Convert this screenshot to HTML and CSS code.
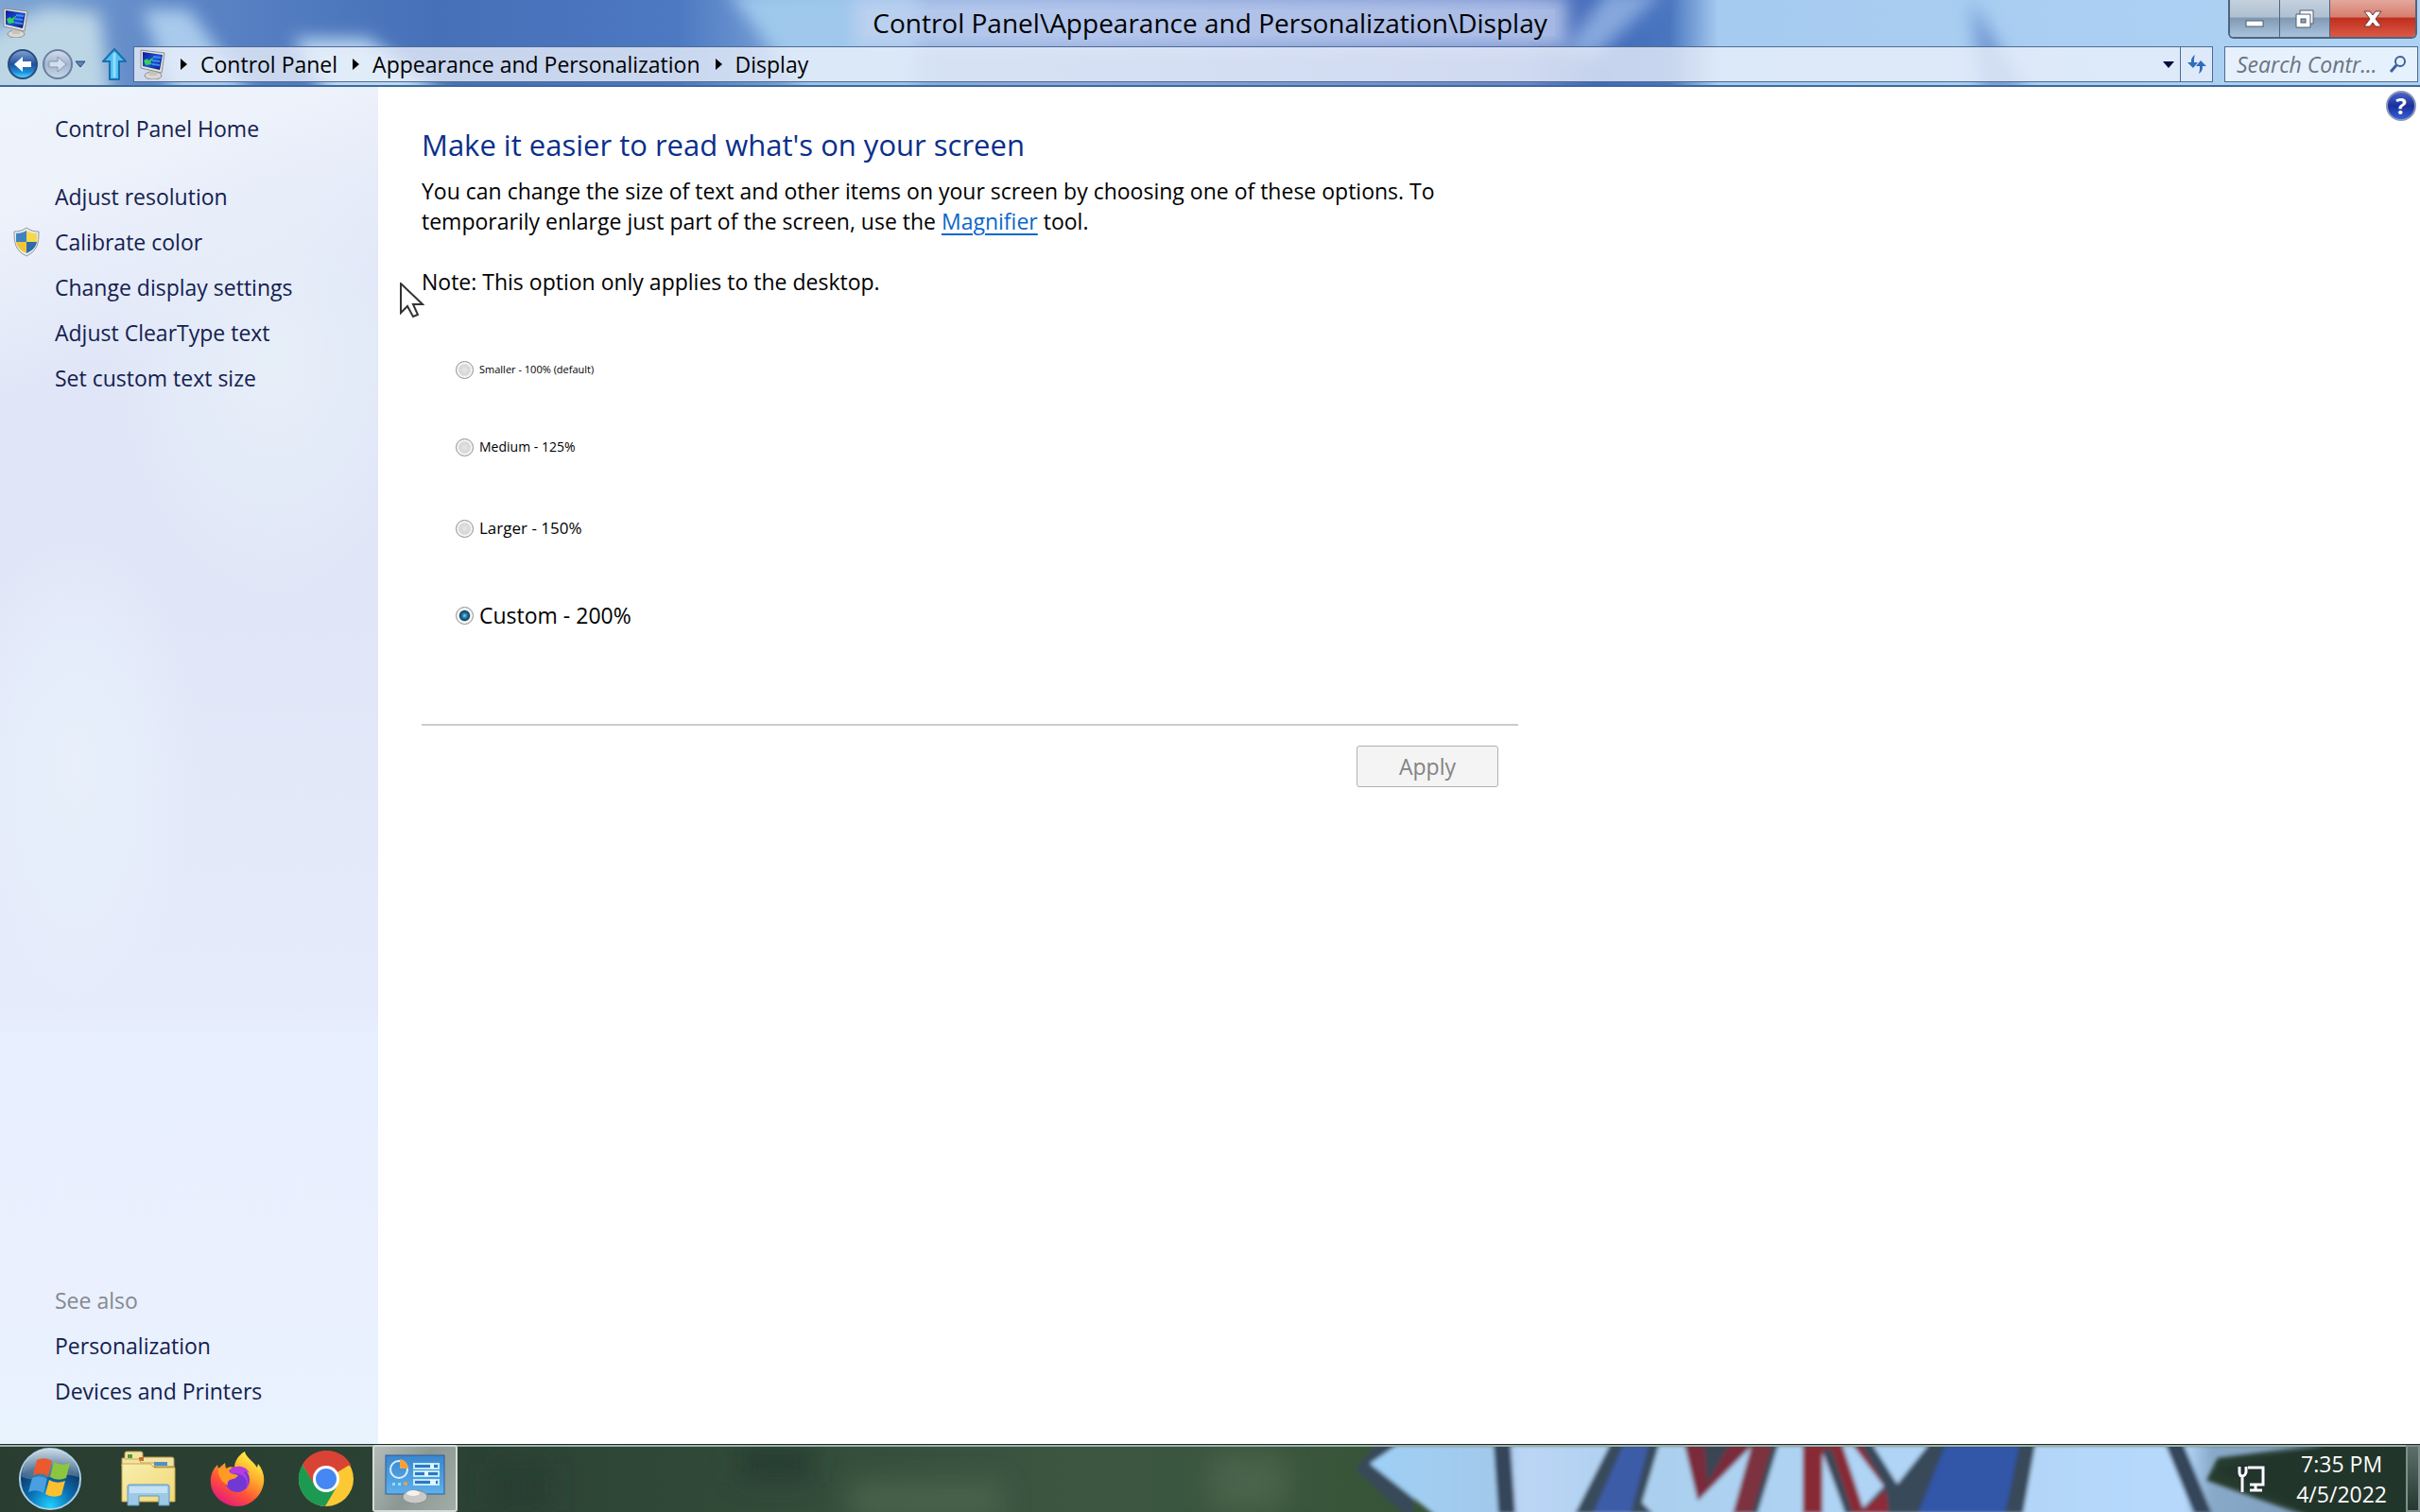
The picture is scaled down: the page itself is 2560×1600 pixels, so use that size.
FILE: index.html
```
<!DOCTYPE html>
<html lang="en">
<head>
    <meta charset="UTF-8">
    <meta name="viewport" content="width=device-width, initial-scale=1.0">
    <title>Control Panel\Appearance and Personalization\Display</title>
    <link rel="stylesheet" href="styles.css">
</head>
<body>

    <!-- Shared icons -->
    <svg class="defs" width="0" height="0" aria-hidden="true">
        <defs>
            <linearGradient id="screenFill" x1="0" y1="0" x2="1" y2="1">
                <stop offset="0" stop-color="#0a1a9c"/>
                <stop offset="0.5" stop-color="#1c4fd6"/>
                <stop offset="1" stop-color="#0a1470"/>
            </linearGradient>
            <symbol id="monitor" viewBox="0 0 28 32">
                <ellipse cx="15" cy="28" rx="9" ry="4" fill="#d9d8d2" stroke="#8f8f8c"/>
                <path d="M11 20h8v8h-8z" fill="#c4c3bd"/>
                <path d="M2 1l25 3-3 21-22-5z" fill="#e6e4da" stroke="#8b8c90"/>
                <path d="M4 3l21 3-3 16-18-4z" fill="url(#screenFill)"/>
                <path d="M15 8l8 1M14 12l8 1M14 16l8 1" stroke="#3f8cf0" stroke-width="2"/>
                <path d="M5 12l4-2 1 2 6-4-4 6 2 2-7 1z" fill="#35d05a"/>
            </symbol>
        </defs>
    </svg>

    <div class="window">
        <header class="frame">
            <svg class="sky" viewBox="0 0 2560 92" preserveAspectRatio="none" aria-hidden="true">
                <defs>
                    <filter id="cloudBlur" x="-20%" y="-50%" width="140%" height="200%">
                        <feGaussianBlur stdDeviation="9"/>
                    </filter>
                    <linearGradient id="skyFill">
                        <stop offset="0" stop-color="#7fa5d3"/>
                        <stop offset="0.07" stop-color="#5c86c6"/>
                        <stop offset="0.18" stop-color="#4670b8"/>
                        <stop offset="0.28" stop-color="#4d79c2"/>
                        <stop offset="0.34" stop-color="#86aedd"/>
                        <stop offset="0.45" stop-color="#8ba6dc"/>
                        <stop offset="0.63" stop-color="#6c86cb"/>
                        <stop offset="0.66" stop-color="#4169b8"/>
                        <stop offset="0.69" stop-color="#4a76c0"/>
                        <stop offset="0.71" stop-color="#a6cbf0"/>
                        <stop offset="1" stop-color="#add2f3"/>
                    </linearGradient>
                </defs>
                <rect width="2560" height="92" fill="url(#skyFill)"/>
                <g filter="url(#cloudBlur)">
                    <path d="M-20 40L50 8 105 14 118 110H-20z" fill="#bcd6e6"/>
                    <path d="M150 10h50l70 100H185z" fill="#a9caec"/>
                    <path d="M310 42h80l90 70H350z" fill="#bcd9f2"/>
                    <path d="M770 -10h200v110H850z" fill="#9fc8ec"/>
                    <path d="M1700 -10h60l-70 70h-40z" fill="#86a8de"/>
                    <path d="M2085 0l60 100h-50z" fill="#7198d2"/>
                </g>
            </svg>

            <div class="titlebar">
                <svg class="title-icon" width="28" height="32" aria-hidden="true"><use href="#monitor"/></svg>
                <h1>Control Panel\Appearance and Personalization\Display</h1>
                <div class="controls">
                    <button type="button" class="minimize" aria-label="Minimize">
                        <svg width="20" height="8" viewBox="0 0 20 8"><rect x="1" y="1" width="18" height="6" fill="#fff" stroke="#4b5a70"/></svg>
                    </button>
                    <button type="button" class="restore" aria-label="Restore">
                        <svg width="20" height="20" viewBox="0 0 20 20"><path d="M5 1h14v14h-3v4H1V5h4z" fill="#fff" stroke="#4b5a70"/><path d="M5 5h11v10" fill="none" stroke="#4b5a70"/><rect x="6" y="10" width="5" height="4" fill="#8fa3bd" stroke="#4b5a70"/></svg>
                    </button>
                    <button type="button" class="close" aria-label="Close">
                        <svg width="20" height="18" viewBox="0 0 20 18"><path d="M1 1h6l3 4 3-4h6l-6 8 6 8h-6l-3-4-3 4H1l6-8z" fill="#fff" stroke="#6b3a3a"/></svg>
                    </button>
                </div>
            </div>

            <div class="navbar">
                <button type="button" class="round back" aria-label="Back">
                    <svg width="22" height="22" viewBox="0 0 22 22"><path d="M2 11l9-8v5h9v6h-9v5z" fill="#fff"/></svg>
                </button>
                <button type="button" class="round forward" aria-label="Forward">
                    <svg width="22" height="22" viewBox="0 0 22 22"><path d="M20 11l-9-8v5H2v6h9v5z" fill="#d5deec" stroke="#8095b4"/></svg>
                </button>
                <button type="button" class="recent" aria-label="Recent pages">
                    <svg width="12" height="8" viewBox="0 0 12 8"><path d="M1 1h10L6 7z" fill="#5a86bf" stroke="#27466f"/></svg>
                </button>
                <button type="button" class="up" aria-label="Up one level">
                    <svg width="26" height="34" viewBox="0 0 26 34"><path d="M13 1l12 13h-7v19H8V14H1z" fill="#4fc0f4" stroke="#1c6fae" stroke-width="2"/><path d="M13 5v26" stroke="#93defc" stroke-width="3"/></svg>
                </button>

                <nav class="address" aria-label="Address">
                    <svg width="28" height="32" aria-hidden="true"><use href="#monitor"/></svg>
                    <ol>
                        <li><a href="#">Control Panel</a></li>
                        <li><a href="#">Appearance and Personalization</a></li>
                        <li><a href="#">Display</a></li>
                    </ol>
                    <button type="button" class="history" aria-label="Previous locations">
                        <svg width="12" height="7" viewBox="0 0 12 7"><path d="M0 0h12L6 7z" fill="#06083c"/></svg>
                    </button>
                    <button type="button" class="refresh" aria-label="Refresh">
                        <svg width="20" height="20" viewBox="0 0 20 20"><path d="M8 0C4 3 4 5 4 8H0l6 6 5-6H7c0-4 0-5 1-8zM12 20c4-3 4-5 4-8h4l-6-6-5 6h4c0 4 0 5-1 8z" fill="#2f6bc0"/></svg>
                    </button>
                </nav>

                <div class="search">
                    <input type="text" aria-label="Search Control Panel" placeholder="Search Contr...">
                    <svg width="20" height="20" viewBox="0 0 20 20" aria-hidden="true"><circle cx="12" cy="7" r="5" fill="none" stroke="#39619f" stroke-width="2"/><path d="M8 11l-6 7" stroke="#39619f" stroke-width="3"/></svg>
                </div>
            </div>
        </header>

        <div class="content">
            <aside class="sidebar">
                <ul>
                    <li class="home"><a href="#">Control Panel Home</a></li>
                    <li><a href="#">Adjust resolution</a></li>
                    <li>
                        <svg class="shield" width="28" height="32" viewBox="0 0 28 32" aria-hidden="true">
                            <path d="M14 1c4 3 8 4 13 4 0 12-1 20-13 26C2 25 1 17 1 5c5 0 9-1 13-4z" fill="#e9ecef" stroke="#8c98a4"/>
                            <path d="M14 4v12H3L3 7c4 0 8-1 11-3z" fill="#3f82c0"/>
                            <path d="M14 4c3 2 7 3 11 3v9H14z" fill="#f7d84c"/>
                            <path d="M3 16h11v12C7 25 4 21 3 16z" fill="#f0c53a"/>
                            <path d="M25 16H14v12c7-3 10-7 11-12z" fill="#2c6ba8"/>
                        </svg>
                        <a href="#">Calibrate color</a>
                    </li>
                    <li><a href="#">Change display settings</a></li>
                    <li><a href="#">Adjust ClearType text</a></li>
                    <li><a href="#">Set custom text size</a></li>
                </ul>
                <ul>
                    <li class="muted">See also</li>
                    <li><a href="#">Personalization</a></li>
                    <li><a href="#">Devices and Printers</a></li>
                </ul>
            </aside>

            <main>
                <button type="button" class="help" aria-label="Help">?</button>

                <form class="panel">
                    <h2>Make it easier to read what's on your screen</h2>
                    <p>You can change the size of text and other items on your screen by choosing one of these options. To<br>temporarily enlarge just part of the screen, use the <a href="#">Magnifier</a> tool.</p>
                    <p class="note">Note: This option only applies to the desktop.</p>

                    <div class="sizes">
                        <label class="smaller"><input type="radio" name="size">Smaller - 100% (default)</label>
                        <label class="medium"><input type="radio" name="size">Medium - 125%</label>
                        <label class="larger"><input type="radio" name="size">Larger - 150%</label>
                        <label class="custom"><input type="radio" name="size" checked>Custom - 200%</label>
                    </div>

                    <div class="actions">
                        <button type="submit" disabled>Apply</button>
                    </div>
                </form>

                <svg class="cursor" width="26" height="38" viewBox="0 0 26 38" aria-hidden="true">
                    <path d="M1 1v31l7-7 6 11 5-2-5-11h10z" fill="#fff" stroke="#333" stroke-width="2"/>
                </svg>
            </main>
        </div>
    </div>

    <footer class="taskbar">
        <svg class="wallpaper" viewBox="0 0 2560 72" preserveAspectRatio="none" aria-hidden="true">
            <defs>
                <filter id="grassBlur"><feGaussianBlur stdDeviation="14"/></filter>
                <filter id="softBlur"><feGaussianBlur stdDeviation="2"/></filter>
                <linearGradient id="grass">
                    <stop offset="0" stop-color="#293d30"/>
                    <stop offset="0.2" stop-color="#2b4234"/>
                    <stop offset="0.3" stop-color="#314a38"/>
                    <stop offset="0.45" stop-color="#3c5642"/>
                    <stop offset="0.56" stop-color="#38553a"/>
                    <stop offset="1" stop-color="#23362c"/>
                </linearGradient>
                <linearGradient id="lightSky" gradientUnits="userSpaceOnUse" x1="1450" y1="0" x2="2450" y2="0">
                    <stop offset="0" stop-color="#9fd0f6"/>
                    <stop offset="0.14" stop-color="#a3c8ea"/>
                    <stop offset="0.16" stop-color="#bcd5f5"/>
                    <stop offset="0.3" stop-color="#abd0ef"/>
                    <stop offset="0.86" stop-color="#b6d9fc"/>
                    <stop offset="0.89" stop-color="#88a9c8"/>
                    <stop offset="1" stop-color="#7d9dbb"/>
                </linearGradient>
            </defs>
            <rect width="2560" height="72" fill="url(#grass)"/>
            <g filter="url(#grassBlur)">
                <path d="M520 20h60v50h-60zM780 0h80v40h-80z" fill="#253c30"/>
                <path d="M900 40h160v40H900zM1280 10h80v60h-80z" fill="#48634b"/>
            </g>
            <g filter="url(#softBlur)">
                <path d="M1455 0h40v80h-3L1434 26z" fill="#38495a"/>
                <path d="M1478 0h980l-112 14-12 24 116 42H1524L1449 20z" fill="url(#lightSky)"/>
                <path d="M1580 0h18l5 74h-18zM2291 0h19l30 74h-19z" fill="#36455a"/>
                <path d="M1703 0h52l-18 62 12 12h-83z" fill="#374b5c"/>
                <path d="M1717 0h27l-19 74h-40z" fill="#3c5ba8"/>
                <path d="M1782 0h72l-58 60z" fill="#7a2c3b"/>
                <path d="M1803 0h26l-23 42z" fill="#3a4552"/>
                <path d="M1853 0h28l-24 74h-24z" fill="#7d3040"/>
                <path d="M1875 0h6l-22 74h-6z" fill="#394857"/>
                <path d="M1907 0h42l24 74h-20l-25-66v66h-21z" fill="#882936"/>
                <path d="M1928 4l10 2 22 68h-8z" fill="#39495a"/>
                <path d="M1960 0h21l26 42 33-42h113l-13 74H1965l28-30z" fill="#37495a"/>
                <path d="M1960 0h9l28 50z" fill="#8a2938"/>
                <path d="M2058 0h78l-15 74h-92z" fill="#3057a8"/>
                <path d="M1965 74l30-26 3 26z" fill="#8f2b39"/>
                <path d="M2560 0h-98l-60 14-58 12 36 16 60 32h120z" fill="#23362c"/>
            </g>
        </svg>

        <div class="apps">
            <button type="button" aria-label="Start">
                <svg width="68" height="68" viewBox="0 0 68 68">
                    <defs>
                        <radialGradient id="orb" cx="0.5" cy="0.95" r="0.9">
                            <stop offset="0" stop-color="#1fd0ff"/>
                            <stop offset="0.4" stop-color="#0c6fb4"/>
                            <stop offset="0.75" stop-color="#0e3a68"/>
                            <stop offset="1" stop-color="#6d8aa5"/>
                        </radialGradient>
                        <linearGradient id="orbShine" x1="0" y1="0" x2="0" y2="1">
                            <stop offset="0" stop-color="#dfe9f1" stop-opacity="0.8"/>
                            <stop offset="1" stop-color="#8fa8bd" stop-opacity="0.35"/>
                        </linearGradient>
                    </defs>
                    <circle cx="34" cy="34" r="32" fill="url(#orb)" stroke="#a8cfe8" stroke-width="2"/>
                    <path d="M4 32a30 30 0 0 1 60 0q-14-5-30 0t-30 0z" fill="url(#orbShine)"/>
                    <path d="M20 14q9-4 16 1l-4 16q-8-5-16-1z" fill="#ea5a2c"/>
                    <path d="M38 16q8 5 17 1l-4 16q-9 4-17-1z" fill="#8cc63e"/>
                    <path d="M15 33q8-4 16 1l-4 15q-7-5-16-1z" fill="#4a9fe0"/>
                    <path d="M33 35q8 5 17 1l-4 15q-9 4-17-1z" fill="#fcc02e"/>
                </svg>
            </button>
            <button type="button" aria-label="File Explorer">
                <svg width="60" height="60" viewBox="0 0 60 60">
                    <defs>
                        <linearGradient id="folder" x1="0" y1="0" x2="1" y2="1">
                            <stop offset="0" stop-color="#f8eeb0"/>
                            <stop offset="1" stop-color="#f1d873"/>
                        </linearGradient>
                    </defs>
                    <path d="M5 8V3q0-2 2-2h15q2 0 2 2v4h31q2 0 2 2v8H2V8z" fill="#f3e3a0" stroke="#b99a4e"/>
                    <path d="M8 4h5v4H8z" fill="#4b9a3b"/>
                    <path d="M20 7h5v4h-5z" fill="#c56a2a"/>
                    <path d="M5 9h15l2 4h14l2 4h20" fill="none" stroke="#c8a75a"/>
                    <path d="M36 12h14v4H36z" fill="#4d92c8"/>
                    <path d="M2 14h30l4 4h22v36H2z" fill="url(#folder)" stroke="#c9a850"/>
                    <path d="M8 38q0-2 2-2h40q2 0 2 2v20H41V48H20v10H8z" fill="#9cc9e8" stroke="#5f98c4"/>
                    <path d="M10 38h40v7H10z" fill="#c5e1f3"/>
                </svg>
            </button>
            <button type="button" aria-label="Firefox">
                <svg width="60" height="60" viewBox="0 0 60 60">
                    <defs>
                        <linearGradient id="fox" x1="0.8" y1="0.1" x2="0.25" y2="1">
                            <stop offset="0" stop-color="#fff044"/>
                            <stop offset="0.35" stop-color="#ffa52a"/>
                            <stop offset="0.65" stop-color="#ff5038"/>
                            <stop offset="1" stop-color="#e31587"/>
                        </linearGradient>
                    </defs>
                    <path d="M38 1c1 6 9 10 13 17l1-4c5 6 7 13 6 20-2 14-14 25-28 25S3 48 2 35c-1-8 2-15 7-20l1 4 7-6 1 6c3-2 6-2 9-1 0-7 5-14 11-17z" fill="url(#fox)"/>
                    <circle cx="30" cy="31" r="13" fill="#7338d4"/>
                    <path d="M23 19c7-4 16-3 20 5-3-2-5-2-6-1 5 6 6 13 2 18 4-10-2-18-16-17z" fill="#b73be0"/>
                    <path d="M10 19c7-3 11 1 13 5l8 2c-2 4-6 4-9 5-2 2-3 3-2 6-6-4-11-9-10-18z" fill="#ff9a25"/>
                </svg>
            </button>
            <button type="button" aria-label="Chrome">
                <svg width="60" height="60" viewBox="0 0 60 60">
                    <circle cx="30" cy="30" r="29" fill="#fcc934"/>
                    <path d="M30 30L5 15a29 29 0 0 1 50 0z" fill="#d94335"/>
                    <path d="M30 16h26.500a29 29 0 0 0-51.500-1l12 21z" fill="#d94335"/>
                    <path d="M5 15a29 29 0 0 0 24 44l13-22-24 0z" fill="#1d9a51"/>
                    <circle cx="30" cy="30" r="14" fill="#fff"/>
                    <circle cx="30" cy="30" r="11" fill="#4587f3"/>
                </svg>
            </button>
            <button type="button" class="active" aria-label="Control Panel">
                <svg width="64" height="52" viewBox="0 0 64 52">
                    <defs>
                        <linearGradient id="cpanel" x1="0" y1="0" x2="0" y2="1">
                            <stop offset="0" stop-color="#3a86cf"/>
                            <stop offset="1" stop-color="#5fb0ea"/>
                        </linearGradient>
                    </defs>
                    <rect x="1" y="1" width="62" height="41" fill="url(#cpanel)" stroke="#2a5f9c"/>
                    <circle cx="15" cy="16" r="9" fill="none" stroke="#d6f0ff" stroke-width="2"/>
                    <path d="M16 15V5a10 10 0 0 1 9 10z" fill="#f5a13c"/>
                    <path d="M31 10h26v5H31zM31 18h26v5H31zM31 27h26v5H31z" fill="#2f78c0" stroke="#bfe9ff" stroke-width="2"/>
                    <path d="M48 10h4v5h-4zM42 18h4v5h-4zM48 27h6v5h-6z" fill="#e4f7ff"/>
                    <path d="M8 30h3v3H8zM14 30h3v3h-3z" fill="#8fdcff"/>
                    <circle cx="22" cy="31" r="2" fill="#f5a13c"/>
                    <ellipse cx="32" cy="45" rx="13" ry="7" fill="#c9c9c7" stroke="#8d8d8b"/>
                    <ellipse cx="30" cy="41" rx="7" ry="3" fill="#f2f2f0"/>
                </svg>
            </button>
        </div>

        <div class="tray">
            <svg width="30" height="32" viewBox="0 0 30 32" aria-label="Network" role="img">
                <path d="M11 4h16v18H13M19 22v5M13 28h13M5 14v16M2 3v6q0 4 3 4t4-4V3M5 1v6" fill="none" stroke="#222c33" stroke-width="5"/>
                <path d="M11 4h16v18H13M19 22v5M13 28h13M5 14v16M2 3v6q0 4 3 4t4-4V3" fill="none" stroke="#fff" stroke-width="3"/>
            </svg>
            <div class="clock">
                <time>7:35 PM</time>
                <time>4/5/2022</time>
            </div>
            <button type="button" class="show-desktop" aria-label="Show desktop"></button>
        </div>
    </footer>

</body>
</html>
```
FILE: styles.css
```
* {
    box-sizing: border-box;
}

body {
    margin: 0;
    min-height: 100vh;
    display: flex;
    flex-direction: column;
    font-family: 'Open Sans', 'Noto Sans', sans-serif;
    font-size: 23px;
    line-height: 32px;
    color: #000;
    background-color: #fff;
}

button {
    padding: 0;
    border: none;
    background: none;
    font: inherit;
    display: flex;
    align-items: center;
    justify-content: center;
}

ul, ol {
    margin: 0;
    padding: 0;
    list-style: none;
}

.defs {
    position: absolute;
}

.window {
    flex: 1;
    display: flex;
    flex-direction: column;
}

/* Title bar and address bar */
.frame {
    position: relative;
    height: 92px;
    display: flex;
    flex-direction: column;
    border-bottom: 2px solid #3d6a9c;
}

.sky {
    position: absolute;
    top: 0;
    left: 0;
    width: 100%;
    height: 100%;
}

.titlebar {
    position: relative;
    height: 48px;
    display: grid;
    grid-template-columns: 200px 1fr 200px;
    align-items: center;
}

.title-icon {
    margin-left: 2px;
}

h1 {
    margin: 0;
    justify-self: center;
    padding: 0 8px;
    font-size: 28px;
    font-weight: normal;
    line-height: 28px;
    background-color: rgba(196, 211, 241, 0.7);
    box-shadow: 0 0 16px 12px rgba(196, 211, 241, 0.7);
}

.controls {
    align-self: start;
    justify-self: end;
    display: flex;
    height: 41px;
    margin-right: 3px;
    border: 2px solid #51637c;
    border-top: none;
    border-radius: 0 0 6px 6px;
    overflow: hidden;
}

.controls button {
    width: 53px;
    border-right: 1px solid #51637c;
    background: linear-gradient(#c4d0dd 0%, #b0c0d1 45%, #8299b3 50%, #a9c3de 100%);
}

.controls .minimize {
    padding-top: 10px;
}

.controls .close {
    width: 90px;
    border-right: none;
    background: linear-gradient(#e3a79c 0%, #d77f70 45%, #c02f1c 50%, #dc5846 100%);
}

.navbar {
    position: relative;
    display: flex;
    align-items: center;
    height: 40px;
    padding: 0 2px 0 8px;
}

.round {
    width: 32px;
    height: 32px;
    border: 2px solid #2c4a78;
    border-radius: 50%;
}

.back {
    background: linear-gradient(#7d9fd3 0%, #1f4f9c 50%, #1d8fdc 80%, #4fd5ff 100%);
}

.forward {
    margin-left: 5px;
    border-color: #6a7f9f;
    background: linear-gradient(#d0dcea 0%, #a3b5cd 50%, #c6d6e8 100%);
}

.recent {
    width: 16px;
}

.up {
    width: 26px;
    margin: 0 7px 0 15px;
}

.address {
    flex: 1;
    display: flex;
    align-items: center;
    height: 38px;
    padding-left: 5px;
    border: 1px solid #4f6a92;
    background-color: rgba(236, 241, 251, 0.78);
}

.address ol {
    flex: 1;
    display: flex;
}

.address li {
    display: flex;
    align-items: center;
}

.address li::before {
    content: '';
    margin: 0 14px 0 16px;
    border-left: 7px solid #000;
    border-top: 6px solid transparent;
    border-bottom: 6px solid transparent;
}

.address a {
    color: #000;
    text-decoration: none;
}

.history {
    width: 24px;
    height: 100%;
}

.refresh {
    width: 34px;
    height: 100%;
    border-left: 1px solid #4f6a92;
}

.search {
    display: flex;
    align-items: center;
    width: 205px;
    height: 38px;
    margin-left: 12px;
    padding: 0 10px 0 12px;
    border: 1px solid #4f6a92;
    background-color: rgba(240, 247, 255, 0.85);
}

.search input {
    flex: 1;
    min-width: 0;
    padding: 0;
    border: none;
    outline: none;
    background: none;
    font: inherit;
    font-style: italic;
}

.search input::placeholder {
    color: #6b7380;
}

/* Sidebar */
.content {
    flex: 1;
    display: flex;
}

.sidebar {
    width: 400px;
    display: flex;
    flex-direction: column;
    justify-content: space-between;
    padding: 20px 0 32px 58px;
    background:
        radial-gradient(ellipse 130px 260px at 20% 50%, rgba(233, 241, 252, 0.9), transparent),
        radial-gradient(ellipse 180px 260px at 72% 20%, rgba(232, 240, 249, 0.9), transparent),
        linear-gradient(160deg, #eef4fb 0%, #edf2fb 8%, transparent 22%),
        linear-gradient(#dfe5f7 0%, #e0e6f7 35%, #e5ebfa 68%, #e8effe 70%, #eaf0fe 90%, #e8f3fe 100%);
}

.sidebar li {
    display: flex;
    align-items: center;
    height: 48px;
}

.sidebar .home {
    margin-bottom: 24px;
}

.sidebar a {
    color: #14204f;
    text-decoration: none;
}

.sidebar .muted {
    color: #84898f;
}

.shield {
    margin-left: -44px;
    margin-right: 16px;
}

/* Main panel */
main {
    position: relative;
    flex: 1;
    padding: 40px 46px;
}

.panel {
    max-width: 1160px;
}

h2 {
    margin: 0 0 12px;
    font-size: 31px;
    font-weight: normal;
    line-height: 42px;
    color: #0b2f8a;
}

p {
    margin: 0;
}

p a {
    color: #0a66cc;
    text-underline-offset: 4px;
}

.note {
    margin-top: 32px;
}

.sizes {
    display: flex;
    flex-direction: column;
    align-items: flex-start;
    gap: 62px;
    padding: 68px 0 98px 36px;
    border-bottom: 2px solid #cbcbcb;
}

.sizes label {
    display: flex;
    align-items: center;
    gap: 6px;
}

.smaller {
    height: 18px;
    font-size: 11px;
}

.medium {
    height: 22px;
    font-size: 14px;
}

.larger {
    height: 26px;
    font-size: 17px;
}

.custom {
    height: 34px;
    font-size: 23px;
}

.sizes input {
    appearance: none;
    width: 19px;
    height: 19px;
    margin: 0;
    border: 1px solid #8e8f8f;
    border-radius: 50%;
    background: radial-gradient(circle, #e6e6e6 0%, #d6d6d6 45%, #f6f6f6 60%);
}

.sizes input:checked {
    background: radial-gradient(circle at 50% 50%, #6fd0ee 0%, #1f6f9c 25%, #12405f 42%, #f6f6f6 52%);
}

.actions {
    display: flex;
    justify-content: flex-end;
    padding: 21px 21px 0 0;
}

.actions button {
    width: 150px;
    height: 44px;
    border: 1px solid #adb2b5;
    border-radius: 3px;
    background-color: #f4f4f4;
    color: #838383;
}

.help {
    position: absolute;
    top: 4px;
    right: 4px;
    width: 32px;
    height: 32px;
    border: 2px solid #8a97b8;
    border-radius: 50%;
    background: linear-gradient(#4a66c8 0%, #1a2f9c 50%, #3560d8 100%);
    color: #fff;
    font-size: 24px;
    font-weight: bold;
}

.cursor {
    position: absolute;
    top: 207px;
    left: 23px;
}

/* Taskbar */
.taskbar {
    position: relative;
    display: flex;
    justify-content: space-between;
    height: 72px;
    border-top: 1px solid #1d2b2b;
    box-shadow: inset 0 2px 0 #9fb0ab;
}

.wallpaper {
    position: absolute;
    top: 0;
    left: 0;
    width: 100%;
    height: 100%;
    z-index: -1;
}

.apps {
    display: flex;
    padding-left: 8px;
}

.apps button {
    width: 90px;
    margin-right: 4px;
}

.apps button:first-child {
    margin-right: 14px;
}

.apps .active {
    border: 2px solid #d5dad8;
    border-radius: 3px;
    background: linear-gradient(120deg, #b4bcb9, #8b9792 50%, #a2aca8);
}

.tray {
    display: flex;
    align-items: center;
    color: #fff;
}

.clock {
    display: flex;
    flex-direction: column;
    align-items: center;
    margin: 0 20px 0 32px;
}

.show-desktop {
    align-self: stretch;
    width: 15px;
    border: 2px solid #7f908c;
    background: linear-gradient(#5d6f69, #26382f);
}
```
